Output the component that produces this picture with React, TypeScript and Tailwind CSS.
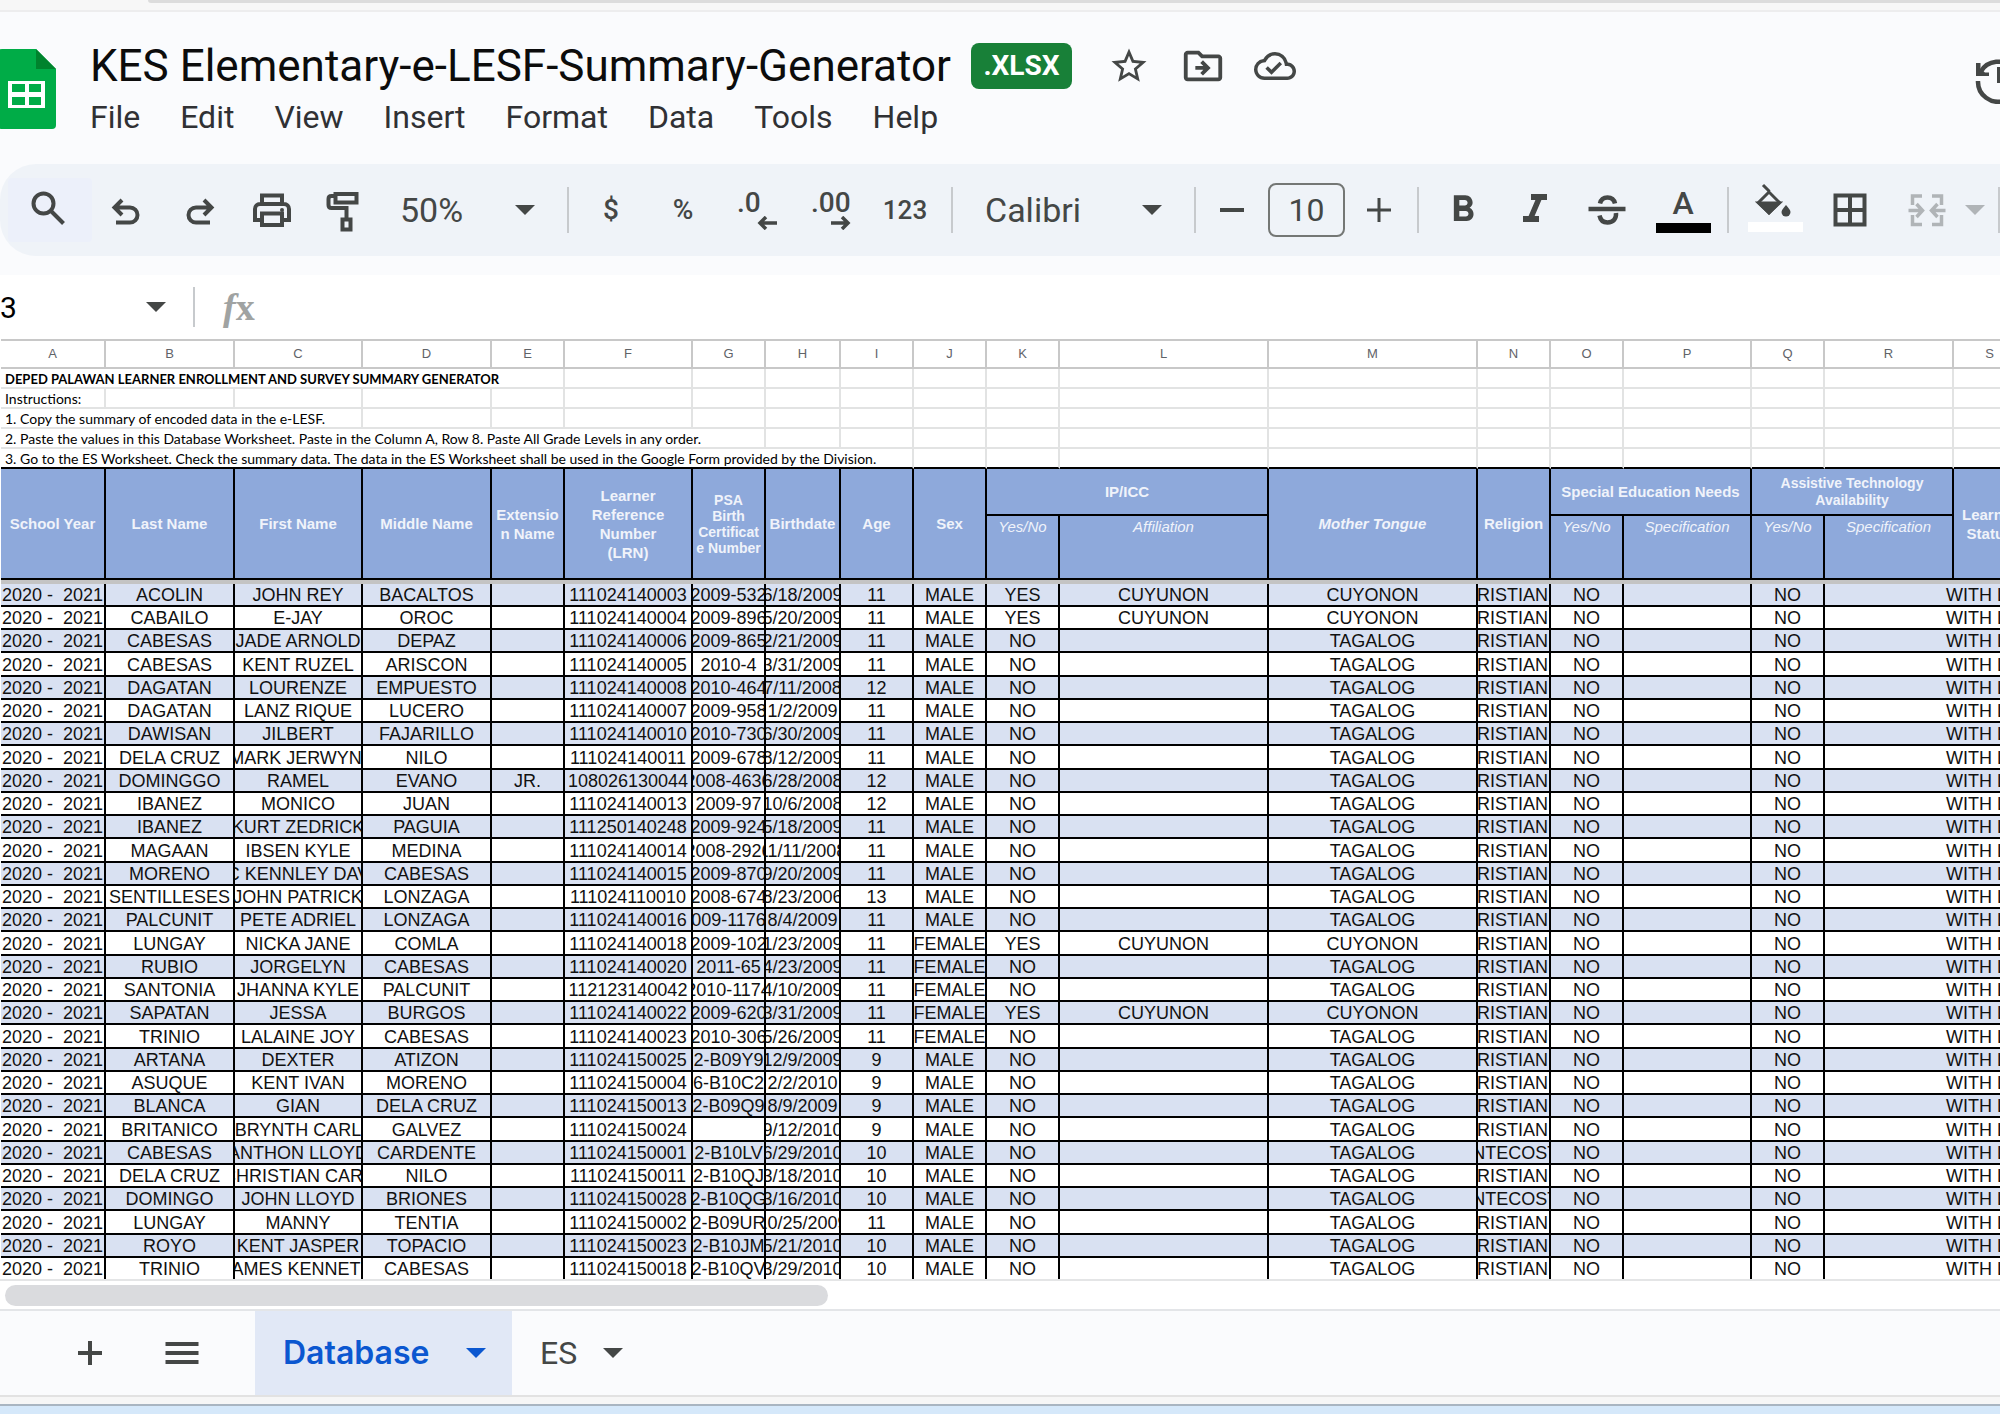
import type { ReactNode } from 'react'
import { MdFormatBold, MdFormatItalic, MdOutlineCloudDone, MdOutlineDriveFileMove, MdStarBorder } from 'react-icons/md'

const MENUS = ['File', 'Edit', 'View', 'Insert', 'Format', 'Data', 'Tools', 'Help']

const COLUMNS = [
  { id: 'A', width: 105 },
  { id: 'B', width: 129 },
  { id: 'C', width: 128 },
  { id: 'D', width: 129 },
  { id: 'E', width: 73 },
  { id: 'F', width: 128 },
  { id: 'G', width: 73 },
  { id: 'H', width: 75 },
  { id: 'I', width: 73 },
  { id: 'J', width: 73 },
  { id: 'K', width: 73 },
  { id: 'L', width: 209 },
  { id: 'M', width: 209 },
  { id: 'N', width: 73 },
  { id: 'O', width: 73 },
  { id: 'P', width: 128 },
  { id: 'Q', width: 73 },
  { id: 'R', width: 129 },
  { id: 'S', width: 73 },
]

// span = number of columns the overflowing text covers
const NOTES = [
  { text: 'DEPED PALAWAN LEARNER ENROLLMENT AND SURVEY SUMMARY GENERATOR', span: 5, bold: true },
  { text: 'Instructions:', span: 1 },
  { text: '1. Copy the summary of encoded data in the e-LESF.', span: 3 },
  {
    text: '2. Paste the values in this Database Worksheet. Paste in the Column A, Row 8. Paste All Grade Levels in any order.',
    span: 7,
  },
  {
    text: '3. Go to the ES Worksheet. Check the summary data. The data in the ES Worksheet shall be used in the Google Form provided by the Division.',
    span: 9,
  },
]

// last, first, middle, extension, lrn, psa, birthdate, age, sex, ip, affiliation, tongue, religion
const LEARNERS = `ACOLIN|JOHN REY|BACALTOS||111024140003|2009-532|6/18/2009|11|MALE|YES|CUYUNON|CUYONON|CHRISTIANITY
CABAILO|E-JAY|OROC||111024140004|2009-896|5/20/2009|11|MALE|YES|CUYUNON|CUYONON|CHRISTIANITY
CABESAS|JADE ARNOLD|DEPAZ||111024140006|2009-865|2/21/2009|11|MALE|NO||TAGALOG|CHRISTIANITY
CABESAS|KENT RUZEL|ARISCON||111024140005|2010-4|3/31/2009|11|MALE|NO||TAGALOG|CHRISTIANITY
DAGATAN|LOURENZE|EMPUESTO||111024140008|2010-464|7/11/2008|12|MALE|NO||TAGALOG|CHRISTIANITY
DAGATAN|LANZ RIQUE|LUCERO||111024140007|2009-958|1/2/2009|11|MALE|NO||TAGALOG|CHRISTIANITY
DAWISAN|JILBERT|FAJARILLO||111024140010|2010-730|6/30/2009|11|MALE|NO||TAGALOG|CHRISTIANITY
DELA CRUZ|MARK JERWYN |NILO||111024140011|2009-678|8/12/2009|11|MALE|NO||TAGALOG|CHRISTIANITY
DOMINGGO|RAMEL|EVANO|JR.|108026130044|2008-4636|6/28/2008|12|MALE|NO||TAGALOG|CHRISTIANITY
IBANEZ|MONICO|JUAN||111024140013|2009-97|10/6/2008|12|MALE|NO||TAGALOG|CHRISTIANITY
IBANEZ|KURT ZEDRICK|PAGUIA||111250140248|2009-924|5/18/2009|11|MALE|NO||TAGALOG|CHRISTIANITY
MAGAAN|IBSEN KYLE|MEDINA||111024140014|2008-2926|11/11/2008|11|MALE|NO||TAGALOG|CHRISTIANITY
MORENO|C KENNLEY DAV|CABESAS||111024140015|2009-870|9/20/2009|11|MALE|NO||TAGALOG|CHRISTIANITY
SENTILLESES|JOHN PATRICK|LONZAGA||111024110010|2008-674|8/23/2006|13|MALE|NO||TAGALOG|CHRISTIANITY
PALCUNIT|PETE ADRIEL|LONZAGA||111024140016|2009-11768|8/4/2009|11|MALE|NO||TAGALOG|CHRISTIANITY
LUNGAY|NICKA JANE|COMLA||111024140018|2009-102|1/23/2009|11|FEMALE|YES|CUYUNON|CUYONON|CHRISTIANITY
RUBIO|JORGELYN|CABESAS||111024140020|2011-65|4/23/2009|11|FEMALE|NO||TAGALOG|CHRISTIANITY
SANTONIA|JHANNA KYLE|PALCUNIT||112123140042|2010-1174|4/10/2009|11|FEMALE|NO||TAGALOG|CHRISTIANITY
SAPATAN|JESSA|BURGOS||111024140022|2009-620|3/31/2009|11|FEMALE|YES|CUYUNON|CUYONON|CHRISTIANITY
TRINIO|LALAINE JOY|CABESAS||111024140023|2010-306|5/26/2009|11|FEMALE|NO||TAGALOG|CHRISTIANITY
ARTANA|DEXTER|ATIZON||111024150025|2-B09Y9|12/9/2009|9|MALE|NO||TAGALOG|CHRISTIANITY
ASUQUE|KENT IVAN|MORENO||111024150004|6-B10C2|2/2/2010|9|MALE|NO||TAGALOG|CHRISTIANITY
BLANCA|GIAN|DELA CRUZ||111024150013|2-B09Q9|8/9/2009|9|MALE|NO||TAGALOG|CHRISTIANITY
BRITANICO|BRYNTH CARL|GALVEZ||111024150024||9/12/2010|9|MALE|NO||TAGALOG|CHRISTIANITY
CABESAS|ANTHON LLOYD|CARDENTE||111024150001|2-B10LV|6/29/2010|10|MALE|NO||TAGALOG|PENTECOSTAL
DELA CRUZ|CHRISTIAN CARL|NILO||111024150011|2-B10QJ|3/18/2010|10|MALE|NO||TAGALOG|CHRISTIANITY
DOMINGO|JOHN LLOYD|BRIONES||111024150028|2-B10QG|3/16/2010|10|MALE|NO||TAGALOG|PENTECOSTAL
LUNGAY|MANNY|TENTIA||111024150002|2-B09UR|10/25/2009|11|MALE|NO||TAGALOG|CHRISTIANITY
ROYO|KENT JASPER|TOPACIO||111024150023|2-B10JM|5/21/2010|10|MALE|NO||TAGALOG|CHRISTIANITY
TRINIO|JAMES KENNETH|CABESAS||111024150018|2-B10QV|3/29/2010|10|MALE|NO||TAGALOG|CHRISTIANITY`
  .split('\n')
  .map((line) => ['2020 -  2021', ...line.split('|'), 'NO', '', 'NO', '', 'WITH LRN'])

const LAST_ROW = LEARNERS.length - 1

function rowHeight(row: number) {
  if (row === LAST_ROW) return 'h-[21px]'
  return row % 4 === 3 ? 'h-6' : 'h-[23px]'
}

function Icon({ children, width = 4 }: { children: ReactNode; width?: number }) {
  return (
    <svg viewBox="0 0 48 48" className="size-12 shrink-0" fill="none" stroke="currentColor" strokeWidth={width} aria-hidden="true">
      {children}
    </svg>
  )
}

function Caret() {
  return (
    <svg viewBox="0 0 20 10" className="h-[10px] w-5 shrink-0" fill="currentColor" aria-hidden="true">
      <path d="M0 0h20L10 10z" />
    </svg>
  )
}

function Tool({ label, className = 'w-18', children }: { label: string; className?: string; children: ReactNode }) {
  return (
    <button type="button" aria-label={label} className={`flex h-16 shrink-0 items-center justify-center ${className}`}>
      {children}
    </button>
  )
}

function Divider({ className = 'h-[46px]' }: { className?: string }) {
  return <div className={`w-[2px] shrink-0 bg-[#c7cacd] ${className}`} />
}

function Dropdown({ label, value, className }: { label: string; value: string; className: string }) {
  return (
    <label className={`relative flex h-16 shrink-0 items-center ${className}`}>
      <span className="sr-only">{label}</span>
      <select className="w-full appearance-none bg-transparent text-[34px] leading-10" defaultValue={value}>
        <option>{value}</option>
      </select>
      <span className="pointer-events-none absolute right-8">
        <Caret />
      </span>
    </label>
  )
}

function Header() {
  return (
    <header className="flex h-[152px] items-start overflow-hidden pt-7">
      <svg viewBox="0 0 58 80" className="-ml-[2px] mt-[9px] h-20 w-[58px] shrink-0" aria-hidden="true">
        <path d="M4 0h34l20 20v56a4 4 0 0 1-4 4H4a4 4 0 0 1-4-4V4a4 4 0 0 1 4-4z" fill="#00ac47" />
        <path d="M38 0l20 20H38z" fill="#00832d" />
        <path d="M10 32h37v27H10z" fill="#fff" />
        <path d="M14 35h13v8H14zM31 35h12v8H31zM14 48h13v8H14zM31 48h12v8H31z" fill="#00ac47" />
      </svg>
      <div className="ml-[34px]">
        <div className="flex h-[52px] items-center text-[#444746]">
          <h1 className="text-[44px] leading-[52px] whitespace-nowrap text-[#0c0c0c]">
            KES Elementary-e-LESF-Summary-Generator
          </h1>
          <span className="ml-5 flex h-[46px] w-[101px] items-center justify-center rounded-lg bg-[#188038] text-[28px] font-bold text-white">
            .XLSX
          </span>
          <button type="button" aria-label="Star" className="ml-9">
            <MdStarBorder className="size-[42px]" />
          </button>
          <button type="button" aria-label="Move" className="ml-[30px]">
            <MdOutlineDriveFileMove className="size-[46px]" />
          </button>
          <button type="button" aria-label="Document status" className="ml-7">
            <MdOutlineCloudDone className="size-[42px]" />
          </button>
        </div>
        <nav className="mt-[5px] flex gap-10 text-[32px] leading-10 text-[#303134]">
          {MENUS.map((menu) => (
            <button key={menu} type="button">
              {menu}
            </button>
          ))}
        </nav>
      </div>
      <button type="button" aria-label="Version history" className="mt-4 ml-auto w-[26px] overflow-hidden text-[#444746]">
        <Icon width={4.5}>
          <path d="M6.5 16A20 20 0 1 1 4 25" />
          <path d="M2 7h4.500v6l4.500 3.500h4V20H2z" fill="currentColor" stroke="none" />
          <path d="M25 11v16" strokeWidth="4" />
        </Icon>
      </button>
    </header>
  )
}

function Toolbar() {
  return (
    <div className="flex h-[92px] items-center overflow-hidden rounded-l-[36px] bg-[#eff3f8] text-[32px] text-[#444746]">
      <Tool label="Search the menus" className="ml-2 w-21 rounded bg-[#ecf0fa]">
        <Icon>
          <circle cx="17.500" cy="17.500" r="10" />
          <path d="M24.500 24.500L37.500 37.500" />
        </Icon>
      </Tool>
      <Tool label="Undo">
        <Icon>
          <path d="M18 14l-7.500 7.500 7.500 7.500M11 21.500h15a7.500 7.500 0 0 1 0 15H12" />
        </Icon>
      </Tool>
      <Tool label="Redo">
        <Icon>
          <path d="M28 14l7.500 7.500-7.500 7.500M35 21.500H20a7.500 7.500 0 0 0 0 15h14" />
        </Icon>
      </Tool>
      <Tool label="Print">
        <Icon>
          <path d="M14 18V9.500h20V18M13 34H7V23a5 5 0 0 1 5-5h24a5 5 0 0 1 5 5v11h-6" />
          <path d="M14 27.500h20V39H14z" />
          <circle cx="34" cy="24" r="2" fill="currentColor" stroke="none" />
        </Icon>
      </Tool>
      <Tool label="Paint format">
        <Icon>
          <path d="M15.500 8h21v8.500h-21zM15 10h-3.500q-3 0-3 3V19q0 3 3 3h15v11M22.500 33.500h8v10h-8z" />
        </Icon>
      </Tool>
      <Dropdown label="Zoom" value="50%" className="w-[187px] pl-5" />
      <Divider />
      <Tool label="Format as currency" className="ml-[6px] w-18 text-[28px] font-medium">
        $
      </Tool>
      <Tool label="Format as percent" className="w-18 text-[28px] font-medium">
        %
      </Tool>
      <Tool label="Decrease decimal places" className="w-19">
        <span className="flex w-10 flex-col text-left text-[28px] leading-[26px] font-medium">
          .0
          <svg viewBox="0 0 20 14" className="h-[14px] w-5 self-end" fill="none" stroke="currentColor" strokeWidth="3.500" aria-hidden="true">
            <path d="M20 7H3M9 1L3 7l6 6" />
          </svg>
        </span>
      </Tool>
      <Tool label="Increase decimal places">
        <span className="flex w-10 flex-col text-left text-[28px] leading-[26px] font-medium">
          .00
          <svg viewBox="0 0 20 14" className="h-[14px] w-5 self-end" fill="none" stroke="currentColor" strokeWidth="3.500" aria-hidden="true">
            <path d="M0 7h17M11 1l6 6-6 6" />
          </svg>
        </span>
      </Tool>
      <Tool label="More formats" className="w-19 text-[26px] font-medium">
        123
      </Tool>
      <Divider className="ml-2 h-[46px]" />
      <Dropdown label="Font" value="Calibri" className="w-[241px] pl-8" />
      <Divider />
      <Tool label="Decrease font size" className="w-18">
        <Icon>
          <path d="M12 24h24" />
        </Icon>
      </Tool>
      <input
        aria-label="Font size"
        defaultValue="10"
        className="h-[54px] w-[77px] shrink-0 rounded-lg border-2 border-[#747775] text-center text-[32px]"
      />
      <Tool label="Increase font size" className="w-17">
        <Icon width={3}>
          <path d="M12 24h24M24 12v24" />
        </Icon>
      </Tool>
      <Divider className="ml-1 h-[46px]" />
      <Tool label="Bold" className="ml-2 w-18">
        <MdFormatBold className="size-11" />
      </Tool>
      <Tool label="Italic">
        <MdFormatItalic className="size-12" />
      </Tool>
      <Tool label="Strikethrough">
        <Icon width={4.5}>
          <path d="M5.500 23h37M17 17.500c1-4.500 4-6 7.500-6s6.500 1.500 7.500 6M16.500 29.500c1 5 4.500 7 8 7 6 0 9-4 8.500-9.500" />
        </Icon>
      </Tool>
      <Tool label="Text colour" className="w-20">
        <span className="flex flex-col items-center gap-1 font-medium">
          <span className="leading-8">A</span>
          <span className="h-[10px] w-[55px] bg-black" />
        </span>
      </Tool>
      <Divider className="ml-1 h-[46px]" />
      <Tool label="Fill colour" className="ml-[10px] w-18 pb-[6px]">
        <span className="flex flex-col items-center">
          <svg viewBox="0 2 48 40" className="h-10 w-12" fill="none" stroke="currentColor" strokeWidth="3" aria-hidden="true">
            <path d="M12 5l6.500 6.500M18 12L7.500 22.500 18 33l10.500-10.500z" />
            <path d="M7.500 23H28.500L18 33z" fill="currentColor" />
            <path d="M35 25q4.500 5 4.500 7a4.500 4.500 0 0 1-9 0q0-2 4.500-7z" fill="currentColor" stroke="none" />
          </svg>
          <span className="h-[10px] w-[55px] bg-white" />
        </span>
      </Tool>
      <Tool label="Borders" className="w-20">
        <Icon>
          <path d="M8.500 9.500h29v29h-29zM23 9.500v29M8.500 24h29" />
        </Icon>
      </Tool>
      <button type="button" aria-label="Merge cells" className="flex h-16 w-[107px] shrink-0 items-center pl-3 text-[#b0b4b7]">
        <Icon>
          <path
            d="M19 10H9.500v9M29 10h9.500v9M19 38.500H9.500V29M29 38.500h9.500V29M5.500 24.500H19M13.500 18l6 6.500-6 6.500M42.500 24.500H29M34.500 18l-6 6.500 6 6.500"
            strokeWidth="3.500"
          />
        </Icon>
        <span className="ml-[14px]">
          <Caret />
        </span>
      </button>
      <Divider />
    </div>
  )
}

function FormulaBar() {
  return (
    <div className="mt-[19px] flex h-16 items-center bg-white text-[#444746]">
      <input aria-label="Name box" defaultValue="3" className="w-[146px] bg-transparent text-[30px] text-black" />
      <Caret />
      <Divider className="ml-[27px] h-10" />
      <span className="ml-7 font-['Liberation_Serif',serif] text-[38px] leading-10 font-bold text-[#a0a3a2]">
        <i>f</i>x
      </span>
      <input aria-label="Formula" className="min-w-0 flex-1 bg-transparent px-4 text-[28px]" />
    </div>
  )
}

const HEAD = 'border-r-2 border-b-2 border-black bg-[#8ea9db] p-0 text-[15px] leading-[19px] font-bold text-[#f0f3fa]'
const SUBHEAD =
  'border-r-2 border-b-2 border-black bg-[#8ea9db] p-0 pt-px align-top text-[15px] leading-[19px] font-normal text-[#f0f3fa] italic'

function Sheet() {
  return (
    <div className="overflow-hidden bg-white font-['Liberation_Sans',Arial,sans-serif]">
      <table className="ml-px w-[2026px] table-fixed border-separate border-spacing-0">
        <colgroup>
          {COLUMNS.map((column) => (
            <col key={column.id} style={{ width: column.width }} />
          ))}
        </colgroup>
        <thead>
          <tr className="h-[30px]">
            {COLUMNS.map((column) => (
              <th
                key={column.id}
                className="border-t-2 border-r-2 border-b-2 border-[#c8c8c8] p-0 text-[13px] leading-4 font-normal text-[#5f6368]"
              >
                {column.id}
              </th>
            ))}
          </tr>
          {NOTES.map((note, i) => {
            const border = i === NOTES.length - 1 ? 'border-r-[#e2e3e3] border-b-black' : 'border-[#e2e3e3]'
            return (
              <tr key={note.text} className="h-5">
                <td colSpan={note.span} className={`border-r-2 border-b-2 p-0 ${border}`}>
                  <div
                    className={`h-[18px] pl-1 font-[Lato,sans-serif] leading-5 whitespace-nowrap text-black ${note.bold ? 'text-[13px] font-bold' : 'text-[14px]'}`}
                  >
                    {note.text}
                  </div>
                </td>
                {COLUMNS.slice(note.span).map((column) => (
                  <td key={column.id} className={`border-r-2 border-b-2 p-0 ${border}`} />
                ))}
              </tr>
            )
          })}
          <tr className="h-[47px]">
            <th rowSpan={2} className={HEAD}>School Year</th>
            <th rowSpan={2} className={HEAD}>Last Name</th>
            <th rowSpan={2} className={HEAD}>First Name</th>
            <th rowSpan={2} className={HEAD}>Middle Name</th>
            <th rowSpan={2} className={HEAD}>Extensio<br />n Name</th>
            <th rowSpan={2} className={HEAD}>Learner<br />Reference<br />Number<br />(LRN)</th>
            <th rowSpan={2} className={HEAD}>
              <div className="text-[14px] leading-4">PSA<br />Birth<br />Certificat<br />e Number</div>
            </th>
            <th rowSpan={2} className={HEAD}>Birthdate</th>
            <th rowSpan={2} className={HEAD}>Age</th>
            <th rowSpan={2} className={HEAD}>Sex</th>
            <th colSpan={2} className={HEAD}>IP/ICC</th>
            <th rowSpan={2} className={HEAD}><i>Mother Tongue</i></th>
            <th rowSpan={2} className={HEAD}>Religion</th>
            <th colSpan={2} className={HEAD}>Special Education Needs</th>
            <th colSpan={2} className={HEAD}>
              <div className="text-[14px] leading-[17px]">Assistive Technology<br />Availability</div>
            </th>
            <th rowSpan={2} className={HEAD}>Learner<br />Status</th>
          </tr>
          <tr className="h-16">
            <th className={SUBHEAD}>Yes/No</th>
            <th className={SUBHEAD}>Affiliation</th>
            <th className={SUBHEAD}>Yes/No</th>
            <th className={SUBHEAD}>Specification</th>
            <th className={SUBHEAD}>Yes/No</th>
            <th className={SUBHEAD}>Specification</th>
          </tr>
          <tr className="h-1">
            <td colSpan={19} className="bg-[#c4c4c4] p-0" />
          </tr>
        </thead>
        <tbody className="text-[18px] text-[#111]">
          {LEARNERS.map((cells, row) => (
            <tr key={cells[5]} className={`${rowHeight(row)} ${row % 2 === 0 ? 'bg-[#d9e1f2]' : 'bg-white'}`}>
              {cells.map((cell, i) => (
                <td
                  key={COLUMNS[i].id}
                  className={`border-black p-0 ${i === 17 ? '' : 'border-r-2'} ${row === LAST_ROW ? '' : 'border-b-2'}`}
                >
                  <div className={`flex h-[21px] justify-center leading-[22px] whitespace-pre ${i === 18 ? 'overflow-visible' : 'overflow-hidden'}`}>
                    {cell}
                  </div>
                </td>
              ))}
            </tr>
          ))}
        </tbody>
      </table>
      <div className="flex h-[30px] items-center border-t-2 border-[#e4e5e6] pl-[5px]">
        <div className="h-[21px] w-[823px] rounded-full bg-[#dadbde]" />
      </div>
    </div>
  )
}

function SheetTabs() {
  return (
    <div className="flex h-[86px] items-stretch border-t-2 border-[#e3e5e8] text-[32px] text-[#444746]">
      <button type="button" aria-label="Add sheet" className="ml-[54px] flex w-18 items-center justify-center">
        <Icon>
          <path d="M12 24h24M24 12v24" />
        </Icon>
      </button>
      <button type="button" aria-label="All sheets" className="ml-5 flex w-18 items-center justify-center">
        <Icon>
          <path d="M7.500 15h33M7.500 24h33M7.500 33h33" />
        </Icon>
      </button>
      <button
        type="button"
        className="ml-[37px] flex w-[257px] items-center bg-[#e1e8f6] pl-7 font-[Inter,sans-serif] font-semibold text-[#0b57d0]"
      >
        Database
        <span className="mr-[26px] ml-auto">
          <Caret />
        </span>
      </button>
      <button type="button" className="flex items-center gap-[26px] pl-7">
        ES
        <Caret />
      </button>
    </div>
  )
}

export default function App() {
  return (
    <div className="min-h-screen overflow-hidden bg-[#d5e8fa] font-[Roboto,sans-serif]">
      <div className="bg-[#fafbfd]">
        <div className="h-3 border-b-2 border-[#ededee] bg-[#f7f7f7]">
          <div className="ml-[148px] h-[3px] rounded-bl bg-[#dcdcdc]" />
        </div>
        <Header />
        <Toolbar />
        <FormulaBar />
        <Sheet />
        <SheetTabs />
      </div>
      <div className="h-[11px] border-t-2 border-b-2 border-t-[#e2e2e2] border-b-[#a9b5c1] bg-[#f6f6f6]" />
    </div>
  )
}
